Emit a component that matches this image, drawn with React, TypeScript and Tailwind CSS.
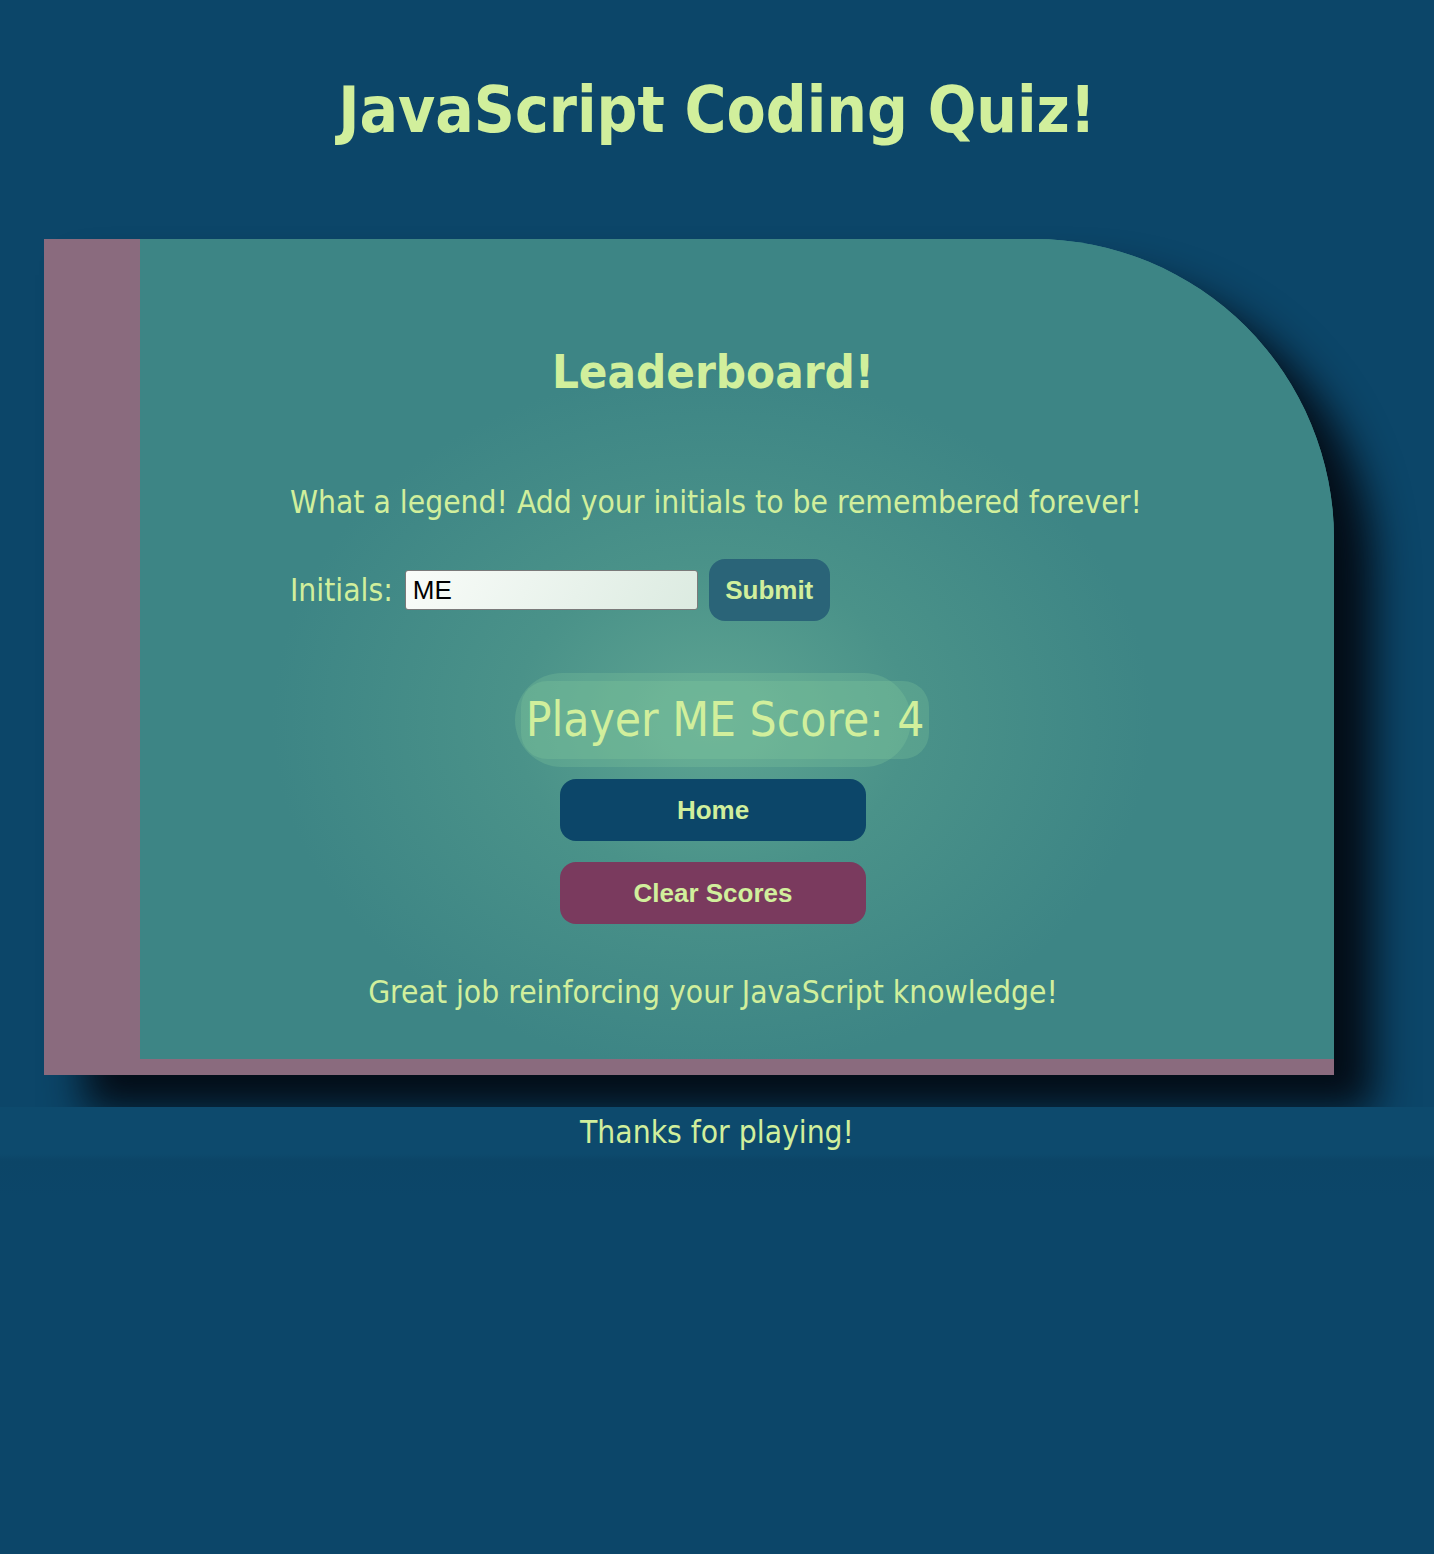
import React from "react";

const App: React.FC = () => {
  return (
    <div className="min-h-screen bg-[#0c4669] text-[#d1ef9c] [font-family:'DejaVu_Sans_Condensed','DejaVu_Sans',sans-serif]">
      <header>
        <h1 className="pt-[78px] text-center text-[63.5px] leading-[64px] font-bold">
          JavaScript Coding Quiz!
        </h1>
      </header>

      <main className="mt-[97px] ml-[44px] w-[1290px] border-l-[96px] border-b-[16px] border-[#8a6b7e] rounded-tr-[300px] bg-[#3d8585] bg-[radial-gradient(ellipse_440px_350px_at_572px_481px,#5ea592_0%,#4a9289_45%,#3d8585_100%)] shadow-[40px_36px_40px_#040d17] pt-[105px] pb-[47px] pr-[48px]">
        <h2 className="text-center text-[47px] leading-[56px] font-bold">
          Leaderboard!
        </h2>

        <div className="mx-auto mt-[82px] w-[846px]">
          <p className="whitespace-nowrap text-[31.5px] leading-[40px]">
            What a legend! Add your initials to be remembered forever!
          </p>
          <form className="mt-[37px] flex items-center" onSubmit={(e) => e.preventDefault()}>
            <label className="text-[31.5px] leading-[40px]">Initials:</label>
            <input
              className="ml-[12px] w-[293px] h-[40px] rounded-[3px] border border-[#7a7a7a] bg-[linear-gradient(120deg,#f9fcf9,#dcebe1)] px-[7px] text-[26px] text-black [font-family:'Liberation_Sans',Arial,sans-serif]"
              defaultValue="ME"
            />
            <button className="ml-[11px] w-[121px] h-[62px] rounded-[16px] bg-[#2a6478] text-[26px] font-bold [font-family:'Liberation_Sans',Arial,sans-serif]">
              Submit
            </button>
          </form>
        </div>

        <div className="mt-[52px] flex justify-center">
          <div className="relative w-[396px] h-[94px] rounded-full bg-[#86cf9f]/25">
            <div className="absolute left-[6px] top-[8px] w-[408px] h-[78px] rounded-[26px] bg-[#86cf9f]/25 flex items-center justify-center text-[47.5px] leading-none">
              Player ME Score: 4
            </div>
          </div>
        </div>

        <div className="mt-[12px] flex flex-col items-center gap-[21px] [font-family:'Liberation_Sans',Arial,sans-serif] text-[26px] font-bold">
          <button className="w-[306px] h-[62px] rounded-[16px] bg-[#0c4669]">Home</button>
          <button className="w-[306px] h-[62px] rounded-[16px] bg-[#7a3a5e]">Clear Scores</button>
        </div>

        <p className="mt-[48px] text-center text-[31.5px] leading-[40px]">
          Great job reinforcing your JavaScript knowledge!
        </p>
      </main>

      <footer className="relative z-10 mt-[32px] h-[90px] bg-[linear-gradient(180deg,#0d4a6d_0%,#0d4a6d_52%,#0c4567_60%,#0c4669_100%)] pt-[5px] text-center text-[31.5px] leading-[40px]">
        Thanks for playing!
      </footer>
    </div>
  );
};

export default App;
